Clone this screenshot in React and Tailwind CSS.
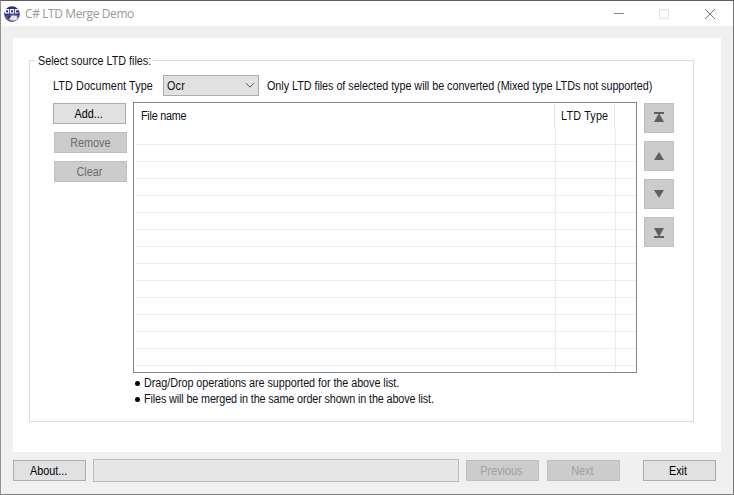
import React from "react";

const ROWS = Array.from({ length: 14 }, (_, i) => i);

// Condensed label text, anchored at its left edge
function Label({ children, className = "" }) {
  return (
    <span className={`inline-block origin-left scale-x-[0.9] whitespace-nowrap ${className}`}>
      {children}
    </span>
  );
}

function Button({ children, disabled, className = "" }) {
  const look = disabled
    ? "bg-[#cccccc] border-[#bfbfbf]"
    : "bg-[#e1e1e1] border-[#adadad] text-black";
  return (
    <button className={`flex h-[21px] w-[73px] shrink-0 items-center justify-center border whitespace-nowrap ${look} ${className}`}>
      <span className="inline-block scale-x-[0.9]">{children}</span>
    </button>
  );
}

function MoveButton({ children }) {
  return (
    <button className="flex size-[30px] items-center justify-center border border-[#bfbfbf] bg-[#cccccc]">
      <svg width="28" height="28" viewBox="0 0 28 28" fill="#606060">{children}</svg>
    </button>
  );
}

function AppIcon() {
  return (
    <svg width="16" height="16" viewBox="0 0 16 16">
      <circle cx="8" cy="8" r="7.8" fill="#2b2d80" />
      <path d="M1 10 Q8 7 15 9.5 Q14 15 8 15.8 Q3 15 1 10" fill="#6a6b9c" />
      <ellipse cx="9.5" cy="12" rx="4" ry="2.5" fill="#e6e3e8" />
      <path d="M3 10l3-1 1 2-3 2z" fill="#383669" />
      <g fill="none" stroke="#f5f5ff" strokeWidth="1.2">
        <rect x="1.6" y="3.6" width="3" height="3.4" />
        <rect x="6.5" y="3.6" width="3" height="3.4" />
        <path d="M14.6 3.6h-3.1v3.4h3.1" />
      </g>
    </svg>
  );
}

export default function App() {
  return (
    <div className="flex h-[495px] w-[734px] flex-col overflow-hidden border-x border-t border-l-[#929292] border-r-[#777777] border-t-[#5d596a] bg-[#f0f0f0] font-['Liberation_Sans',Arial,sans-serif] text-[12px] leading-[14px] text-[#101018]">
      <header className="flex h-[25px] shrink-0 items-center bg-white pl-[3px]">
        <AppIcon />
        <span className="ml-[5px] w-[120px] font-['Open_Sans','Noto_Sans',sans-serif] text-[12px] tracking-[-0.4px] whitespace-nowrap text-[#999999]">
          C# LTD Merge Demo
        </span>
        <svg className="mr-[16px] ml-auto" width="104" height="12" viewBox="0 0 104 12" fill="none">
          <path d="M1 5.5h10" stroke="#888" />
          <rect x="46.5" y="1.5" width="9" height="9" stroke="#e4e4e4" />
          <path d="M92 1l10 10M102 1l-10 10" stroke="#777" />
        </svg>
      </header>

      <main className="mt-[12px] ml-[12px] h-[414px] w-[708px] shrink-0 bg-white pt-[22px] pl-[16px]">
        <section className="h-[362px] w-[665px] border border-[#dcdcdc]">
          <div className="-mt-[7px] ml-[5px] h-[14px] w-[118px] bg-white pl-[3px]">
            <Label>Select source LTD files:</Label>
          </div>

          <div className="mt-[7px] ml-[23px] flex h-[21px] items-center whitespace-nowrap">
            <div className="w-[110px] shrink-0"><Label className="tracking-[0.12px]">LTD Document Type</Label></div>
            <div className="flex h-[21px] w-[96px] shrink-0 items-center justify-between border border-[#adadad] bg-[#e1e1e1] px-[3px]">
              <Label className="tracking-[0.2px]">Ocr</Label>
              <svg width="10" height="7" viewBox="0 0 10 7" fill="none" stroke="#555">
                <path d="M1 1.2l4 4 4-4" />
              </svg>
            </div>
            <Label className="ml-[8px] shrink-0 tracking-[-0.045px]">
              Only LTD files of selected type will be converted (Mixed type LTDs not supported)
            </Label>
          </div>

          <div className="mt-[6px] ml-[23px] flex items-start">
            <div className="flex w-[80px] shrink-0 flex-col gap-[8px] pt-px">
              <Button className="pr-[2px]">Add...</Button>
              <Button disabled className="ml-px text-[#6b6b6b]">Remove</Button>
              <Button disabled className="ml-px pr-[2px] text-[#6b6b6b]">Clear</Button>
            </div>

            <div className="h-[271px] w-[504px] shrink-0 border border-[#828790] bg-white">
              <div className="flex h-[25px] items-stretch pt-px">
                <div className="w-[421px] border-r border-[#e5e5e5] pt-[5px] pl-[7px]"><Label className="tracking-[-0.25px]">File name</Label></div>
                <div className="w-[60px] border-r border-[#e5e5e5] pt-[5px] pl-[6px]"><Label className="tracking-[0.2px]">LTD Type</Label></div>
              </div>
              <div className="flex flex-col pl-[2px]">
                {ROWS.map((i) => (
                  <div key={i} className="flex h-[17px] border-b border-[#ececec]">
                    <div className="w-[420px] border-r border-[#ececec]" />
                    <div className="w-[60px] border-r border-[#ececec]" />
                  </div>
                ))}
                <div className="flex h-[5px]">
                  <div className="w-[420px] border-r border-[#ececec]" />
                  <div className="w-[60px] border-r border-[#ececec]" />
                </div>
              </div>
            </div>

            <div className="ml-[7px] flex flex-col gap-[8px] pt-px">
              <MoveButton><path d="M9 8h10v2H9zM14 9l5 9H9z" /></MoveButton>
              <MoveButton><path d="M14 10l5 8H9z" /></MoveButton>
              <MoveButton><path d="M9 10h10l-5 8z" /></MoveButton>
              <MoveButton><path d="M9 10h10l-5 9zM9 18h10v2H9z" /></MoveButton>
            </div>
          </div>

          <ul className="mt-[3px] ml-[104px] flex flex-col gap-[2px]">
            <li className="flex items-center">
              <span className="mt-px mr-[4px] ml-px size-[5px] rounded-full bg-black" />
              <Label className="tracking-[-0.06px]">Drag/Drop operations are supported for the above list.</Label>
            </li>
            <li className="flex items-center">
              <span className="mt-px mr-[4px] ml-px size-[5px] rounded-full bg-black" />
              <Label className="tracking-[-0.14px]">Files will be merged in the same order shown in the above list.</Label>
            </li>
          </ul>
        </section>
      </main>

      <footer className="mt-[7px] ml-[12px] flex h-[23px] shrink-0 items-center">
        <Button className="pr-[2px]">About...</Button>
        <div className="ml-[7px] h-[23px] w-[366px] border border-[#bcbcbc] bg-[#e6e6e6]" />
        <Button disabled className="ml-[7px] pr-[2px] text-[#a0a0a0]">Previous</Button>
        <Button disabled className="ml-[8px] pr-[2px] text-[#a0a0a0]">Next</Button>
        <Button className="ml-[23px] pr-[2px]">Exit</Button>
      </footer>
      <div className="mt-auto h-px shrink-0 bg-[#808080]" />
    </div>
  );
}
